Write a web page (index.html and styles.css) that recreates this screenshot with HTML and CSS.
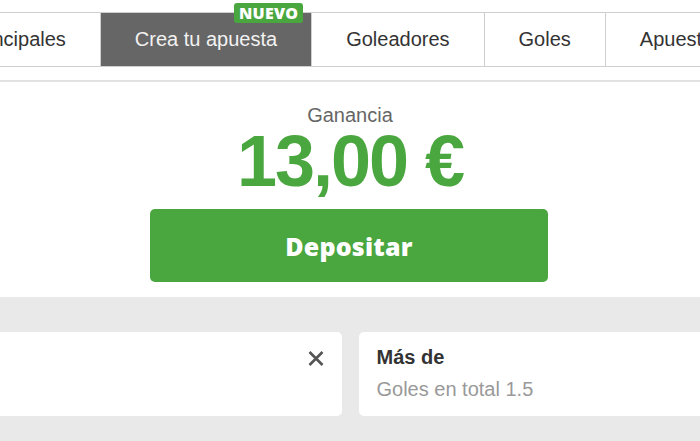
FILE: index.html
```html
<!DOCTYPE html>
<html lang="es">
<head>
<meta charset="utf-8">
<link rel="stylesheet" href="styles.css">
</head>
<body>
<div class="tabs-wrap">
  <nav class="tabs">
    <div class="tab">Principales</div>
    <div class="tab tab-active">Crea tu apuesta<span class="badge">NUEVO</span></div>
    <div class="tab">Goleadores</div>
    <div class="tab">Goles</div>
    <div class="tab">Apuestas especiales</div>
  </nav>
</div>
<div class="divider"></div>
<section class="summary">
  <div class="label">Ganancia</div>
  <div class="amount">13,00 €</div>
  <button class="deposit">Depositar</button>
</section>
<section class="selections">
  <div class="card">
    <svg class="close" width="16" height="15" viewBox="0 0 16 15"><path d="M1.5 1 L14.5 14 M14.5 1 L1.5 14" stroke="#555" stroke-width="2.6" fill="none"/></svg>
  </div>
  <div class="card">
    <div class="card-title">Más de</div>
    <div class="card-sub">Goles en total 1.5</div>
  </div>
</section>
</body>
</html>
```

FILE: styles.css
```css
html, body {
  margin: 0;
  padding: 0;
  background: #fff;
  font-family: "Liberation Sans", Arial, sans-serif;
  overflow: hidden;
  height: 441px;
}
.tabs-wrap {
  overflow: hidden;
  padding-top: 12px;
}
.tabs {
  display: flex;
  height: 55px;
  border-top: 1px solid #cfcfcf;
  border-bottom: 1px solid #cfcfcf;
  box-sizing: border-box;
  margin-left: -66px;
  white-space: nowrap;
}
.tab {
  position: relative;
  display: flex;
  align-items: center;
  justify-content: center;
  padding: 0 34px;
  font-size: 20px;
  color: #333;
  border-right: 1px solid #cfcfcf;
  flex-shrink: 0;
}
.tab-active {
  background: #666;
  color: #f2f2f2;
  overflow: visible;
}
.badge {
  position: absolute;
  top: -10px;
  right: 8px;
  background: #4aa63e;
  color: #fff;
  font-family: "Open Sans", sans-serif;
  font-weight: 800;
  font-size: 16px;
  line-height: 20px;
  padding: 0 5px;
  border-radius: 3px;
  letter-spacing: 0.2px;
}
.tabs-wrap {
  margin-top: 0;
}
.divider {
  margin-top: 13px;
  border-top: 2px solid #e2e2e2;
}
.summary {
  display: flex;
  flex-direction: column;
  align-items: center;
  padding: 22px 0 15px;
}
.label {
  font-size: 20px;
  line-height: 22px;
  color: #666;
}
.amount {
  margin-top: -1px;
  font-size: 72px;
  line-height: 72px;
  font-weight: 700;
  color: #4aa63e;
  letter-spacing: -2px;
}
.deposit {
  margin-top: 12px;
  margin-left: -2px;
  width: 398px;
  height: 73px;
  border: none;
  border-radius: 5px;
  background: #4aa63e;
  color: #fff;
  font-family: "Open Sans", sans-serif;
  font-weight: 800;
  font-size: 25px;
  letter-spacing: 0.2px;
  padding: 0;
}
.selections {
  background: #e9e9e9;
  display: grid;
  grid-template-columns: 360px 360px;
  justify-content: center;
  gap: 17px;
  padding-top: 35px;
  height: 144px;
  box-sizing: border-box;
}
.card {
  position: relative;
  background: #fff;
  border-radius: 5px;
  height: 84px;
  box-sizing: border-box;
  padding: 12px 18px;
}
.close {
  position: absolute;
  top: 19px;
  right: 18px;
}
.card-title {
  font-size: 20px;
  font-weight: 700;
  color: #333;
  line-height: 26px;
}
.card-sub {
  margin-top: 6px;
  font-size: 20px;
  color: #999;
  line-height: 26px;
}
```
